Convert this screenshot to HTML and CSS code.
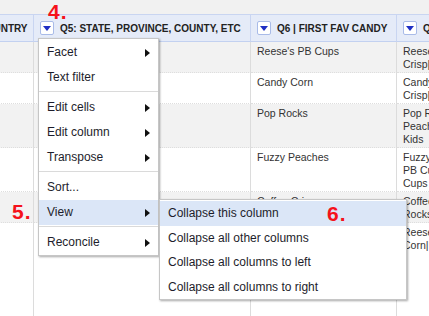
FILE: index.html
```html
<!DOCTYPE html>
<html lang="en">
<head>
  <meta charset="UTF-8">
  <title>Column menu</title>
  <link rel="stylesheet" href="styles.css">
</head>
<body>
  <div class="sheet">
    <div class="top-strip"></div>
    <div class="grid-view">
      <table class="data-table">
        <colgroup>
          <col class="c-country">
          <col class="c-state">
          <col class="c-fav1">
          <col class="c-fav2">
        </colgroup>
        <thead>
          <tr>
            <th><div class="col-head"><span class="col-btn"></span><span>Q4: COUNTRY</span></div></th>
            <th><div class="col-head"><span class="col-btn"></span><span>Q5: STATE, PROVINCE, COUNTY, ETC</span></div></th>
            <th><div class="col-head"><span class="col-btn"></span><span>Q6 | FIRST FAV CANDY</span></div></th>
            <th><div class="col-head"><span class="col-btn"></span><span>Q6 | ALL FAV CANDY</span></div></th>
          </tr>
        </thead>
        <tbody>
          <tr class="odd">
            <td></td><td></td>
            <td>Reese's PB Cups</td>
            <td>Reese's PB Cups|Kit Kat<br>Crisp|Snickers</td>
          </tr>
          <tr>
            <td></td><td></td>
            <td>Candy Corn</td>
            <td>Candy Corn|Nestle<br>Crisp|Twix</td>
          </tr>
          <tr class="odd">
            <td></td><td></td>
            <td>Pop Rocks</td>
            <td>Pop Rocks|Fuzzy<br>Peaches|Sour Patch<br>Kids</td>
          </tr>
          <tr>
            <td></td><td></td>
            <td>Fuzzy Peaches</td>
            <td>Fuzzy Peaches|Reese's<br>PB Cups|Peanut Butter<br>Cups</td>
          </tr>
          <tr class="odd">
            <td></td><td></td>
            <td>Coffee Crisp</td>
            <td>Coffee Crisp|Pop<br>Rocks</td>
          </tr>
          <tr class="last">
            <td></td><td></td>
            <td></td>
            <td>Reese's PB Cups|Candy<br>Corn|Kit Kat</td>
          </tr>
        </tbody>
      </table>
    </div>

    <!-- column dropdown -->
    <ul class="col-menu">
      <li class="menu-item">Facet <span class="sub-arrow"></span></li>
      <li class="menu-item">Text filter</li>
      <li class="menu-sep"></li>
      <li class="menu-item">Edit cells <span class="sub-arrow"></span></li>
      <li class="menu-item">Edit column <span class="sub-arrow"></span></li>
      <li class="menu-item">Transpose <span class="sub-arrow"></span></li>
      <li class="menu-sep"></li>
      <li class="menu-item">Sort...</li>
      <li class="menu-item active has-sub">View <span class="sub-arrow"></span>
        <ul class="sub-menu">
          <li class="menu-item active">Collapse this column</li>
          <li class="menu-item">Collapse all other columns</li>
          <li class="menu-item">Collapse all columns to left</li>
          <li class="menu-item">Collapse all columns to right</li>
        </ul>
      </li>
      <li class="menu-sep"></li>
      <li class="menu-item">Reconcile <span class="sub-arrow"></span></li>
    </ul>

    <!-- step labels -->
    <span class="step step-4">4.</span>
    <span class="step step-5">5.</span>
    <span class="step step-6">6.</span>
  </div>
</body>
</html>
```

FILE: styles.css
```css
* {
  margin: 0;
  padding: 0;
  box-sizing: border-box;
}
body {
  font-family: "Liberation Sans", Arial, sans-serif;
  background: #fff;
  overflow: hidden;
}
.sheet {
  position: relative;
  width: 429px;
  height: 316px;
  overflow: hidden;
}
.top-strip {
  height: 14px;
  background: #f1f1f1;
}
.grid-view {
  overflow: hidden;
  height: 302px;
}
.data-table {
  table-layout: fixed;
  border-collapse: separate;
  border-spacing: 0;
  width: 614px;
  margin-left: -67px;
}
.c-country { width: 101px; }
.c-state { width: 217px; }
.c-fav1 { width: 146px; }
.c-fav2 { width: 150px; }

.data-table th {
  height: 28px;
  background: #e5ebf8;
  border-top: 1px solid #c9d5f1;
  border-bottom: 1px solid #c3d1f0;
  border-right: 1px solid #c9d5f1;
  padding: 0 6px;
  text-align: left;
  font-size: 10px;
  font-weight: bold;
  color: #222;
  white-space: nowrap;
  overflow: hidden;
}
.col-head {
  display: flex;
  align-items: center;
  gap: 6px;
}
.col-btn {
  flex: none;
  width: 14px;
  height: 14px;
  background: #fff;
  border: 1px solid #a9bbe8;
  border-radius: 2px;
  display: flex;
  align-items: center;
  justify-content: center;
}
.col-btn::after {
  content: "";
  border-top: 5px solid #1f2fc4;
  border-left: 4px solid transparent;
  border-right: 4px solid transparent;
  margin-top: 1px;
}

.data-table td {
  vertical-align: top;
  padding: 3px 6px 1px;
  font-size: 10.5px;
  line-height: 13px;
  color: #333;
  border-right: 1px solid #dcdcdc;
  border-bottom: 1px dotted #dedede;
  white-space: nowrap;
  overflow: hidden;
}
.data-table tr.odd td {
  background: #f2f2f2;
}
.data-table tr.last td {
  height: 96px;
  border-bottom: none;
}

/* menus */
.col-menu,
.sub-menu {
  list-style: none;
  position: absolute;
  background: #fff;
  border: 1px solid #c6c6c6;
  box-shadow: 1px 1px 2px rgba(0, 0, 0, .35);
  font-size: 12px;
  color: #1d1d2b;
}
.col-menu {
  left: 38px;
  top: 38px;
  width: 121px;
  padding-top: 1px;
}
.menu-item {
  height: 25px;
  line-height: 25px;
  padding: 0 8px;
  display: flex;
  justify-content: space-between;
  align-items: center;
  white-space: nowrap;
}
.menu-item.active {
  background: #dbe6f7;
}
.menu-sep {
  height: 1px;
  background: #dadada;
  margin: 1px 0 3px;
}
.sub-arrow {
  border-left: 5px solid #111;
  border-top: 4px solid transparent;
  border-bottom: 4px solid transparent;
}
.has-sub {
  position: relative;
}
.sub-menu {
  left: calc(100% + 1px);
  top: -1px;
  width: 248px;
  padding-top: 1px;
}
.sub-menu .menu-item {
  height: 24.5px;
  line-height: 24.5px;
}

/* red step numbers */
.step {
  position: absolute;
  font-size: 21px;
  font-weight: bold;
  color: #f5121b;
  line-height: 1;
  letter-spacing: 1px;
}
.step-4 { left: 48px; top: 1px; }
.step-5 { left: 12px; top: 201px; }
.step-6 { left: 327px; top: 203px; }
```
